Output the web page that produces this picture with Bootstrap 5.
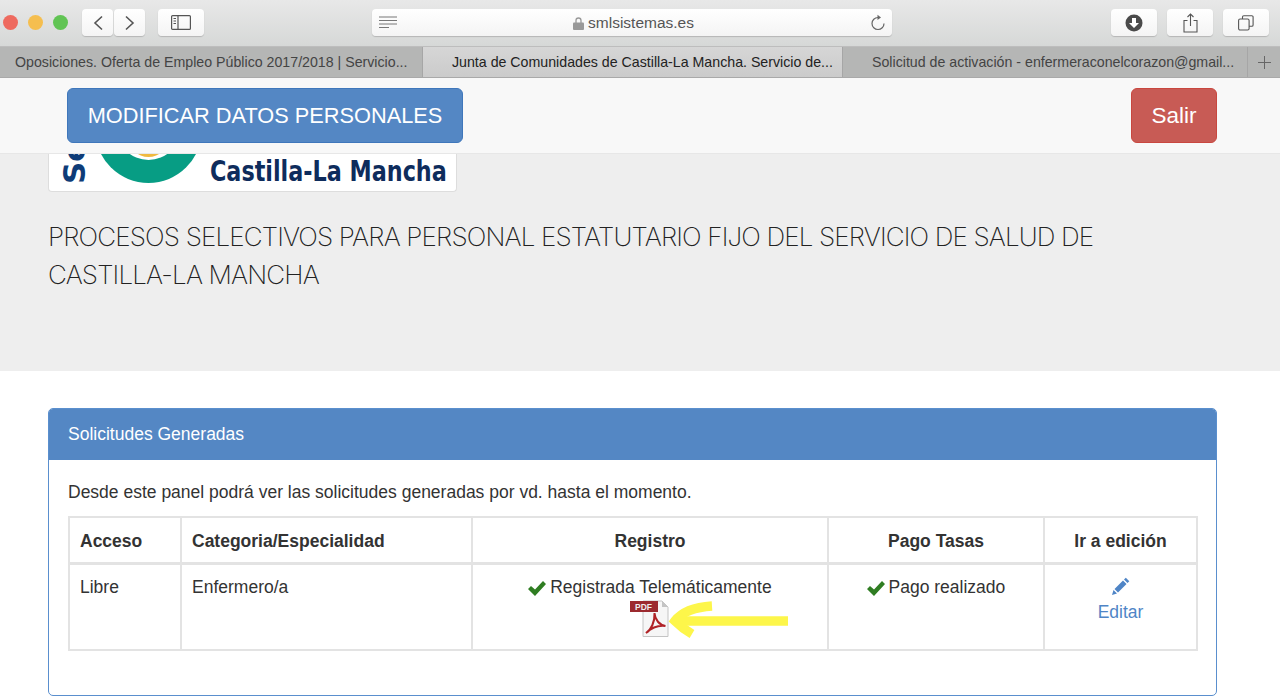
<!doctype html>
<html lang="es">
<head>
<meta charset="utf-8">
<title>Solicitudes</title>
<link href="https://cdn.jsdelivr.net/npm/bootstrap@5.3.0/dist/css/bootstrap.min.css" rel="stylesheet">
<style>
html,body{height:700px;overflow:hidden}
body{font-family:"Liberation Sans",Arial,sans-serif;font-size:17.5px;color:#333;background:#fff}
.chrome-top{height:46px;background:linear-gradient(#e8e8e8,#d6d8d7);padding:9px 0 0 3px}
.light{width:15px;height:15px;border-radius:50%}
.lights{height:27px;gap:10px}
.tb-btn{height:27px;background:linear-gradient(#fff,#f4f4f4);border-radius:4px;box-shadow:0 1px 1px #b5b5b5;display:flex;align-items:center;justify-content:center;color:#555}
.navs{gap:1px;margin-left:14px}
.side-btn{width:46px;margin-left:13px}
.addr{width:520px;margin-left:168px;justify-content:space-between;padding:0 7px;font-size:15.5px;color:#555}
.addr-label{margin-top:1px}
.tools{gap:10px;margin-right:11px}
.tool-btn{width:46px}
.tabbar{height:32px;background:#b5b6b5;border-top:1px solid #bdbdbd;border-bottom:1px solid #a9a9a9;font-size:14.2px;color:#444}
.tabx{width:423px;padding-left:15px;line-height:30px;white-space:nowrap;border-right:1px solid #a6a6a6;overflow:hidden}
.tabx.active{width:420px;background:linear-gradient(#d6d6d6,#cbcbcb);color:#222;padding-left:29px}
.tabx.third{padding-left:29px;width:405px}
.tabplus{flex:1;display:flex;align-items:center;justify-content:center}
.topbar{height:76px;background:#f8f8f8;border-bottom:1px solid #e7e7e7;padding:10px 63px 0 67px}
.blue-btn{background:#5487c4;border:1px solid #3f77bb;color:#fff;font-size:21.75px;border-radius:6px;height:55px;width:396px;padding:1px 0 0;display:flex;align-items:center;justify-content:center}
.red-btn{background:#c85b55;border:1px solid #c9473f;color:#fff;font-size:22.5px;border-radius:6px;height:55px;width:86px;padding:0;display:flex;align-items:center;justify-content:center}
.hero{height:217px;background:#eee;padding-left:48px}
.logo-box{width:409px;height:38px;background:#fff;border:1px solid #ddd;border-top:0;border-radius:0 0 4px 4px;overflow:hidden;display:flex}
.logo-text{font-family:"DejaVu Sans Condensed","DejaVu Sans",sans-serif;font-weight:700;font-size:28px;line-height:30px;color:#0e2c5c;margin:3px 0 0 11px;white-space:nowrap;transform:scaleX(.885);transform-origin:left}
.hero-title{font-family:Inter,sans-serif;font-weight:200;font-size:26px;letter-spacing:-.85px;line-height:38px;color:#222;margin:26px 0 0;width:1100px}
.panel-box{margin:37px 63px 0 48px;height:288px;border:1px solid #5a8fce;border-radius:5px;overflow:hidden}
.panel-head{height:51px;background:#5487c4;color:#fff;padding:0 19px;line-height:51px;font-size:17.5px}
.panel-body{padding:22px 19px 0}
.panel-body p{margin:0 0 14px;line-height:20px;color:#333}
.req{table-layout:fixed;width:1128px;margin:0;border-collapse:collapse;color:#333}
.req td,.req th{border:2px solid #e3e3e3;padding:11px 10px;line-height:23px;font-size:17.5px;vertical-align:top}
.req thead th{height:46px;padding:12px 10px 9px;border-bottom-width:3px;font-weight:700}
.req tbody td{height:84px}
.edit-link{color:#4f85c6;text-decoration:none;display:block;line-height:24px}
.edit-ico{display:block;margin:1px auto 4px}
.check-ico{margin-right:-1px}
.arrow{position:absolute;left:39px;top:-3px}
.pdf-wrap{position:relative;width:40px;height:38px;margin:1px auto 0;left:-1px}
.pdf-ico{display:block}
</style>
</head>
<body>
<div class="chrome-top d-flex">
  <div class="d-flex align-items-center lights"><span class="light" style="background:#ee6a5f"></span><span class="light" style="background:#f5be4f"></span><span class="light" style="background:#61c454"></span></div>
  <div class="d-flex navs">
    <div class="tb-btn" style="width:31px"><svg width="12" height="16" viewBox="0 0 12 16" fill="none" stroke="#555" stroke-width="1.6"><path d="M10 1.5 3 8l7 6.5"/></svg></div>
    <div class="tb-btn" style="width:31px"><svg width="12" height="16" viewBox="0 0 12 16" fill="none" stroke="#555" stroke-width="1.6"><path d="M2 1.5 9 8l-7 6.5"/></svg></div>
  </div>
  <div class="tb-btn side-btn"><svg width="20" height="15" viewBox="0 0 20 15" fill="none" stroke="#555" stroke-width="1.2"><rect x=".6" y=".6" width="18.8" height="13.8" rx="1"/><path d="M7 .6v13.8M2.5 3.5h2.5M2.5 6h2.5M2.5 8.5h2.5"/></svg></div>
  <div class="tb-btn addr">
    <svg width="18" height="13" viewBox="0 0 18 13" stroke="#777" stroke-width="1"><path d="M0 1h18M0 4.500h18M0 8h18M0 11.500h10"/></svg>
    <span class="d-flex align-items-center gap-1 addr-label"><svg width="11" height="13" viewBox="0 0 11 13"><path d="M3 6V3.500a2.500 2.500 0 0 1 5 0V6" fill="none" stroke="#999" stroke-width="1.300"/><rect y="5.500" width="11" height="7.500" rx="1" fill="#999"/></svg>smlsistemas.es</span>
    <svg width="15" height="17" viewBox="0 0 15 17" fill="none" stroke="#666" stroke-width="1.200"><path d="M8 3.500a6 6 0 1 0 6 6"/><path d="M7.500 .8 11 3.500 7.500 6z" fill="#666" stroke="none"/></svg>
  </div>
  <div class="d-flex ms-auto tools">
    <div class="tb-btn tool-btn"><svg width="18" height="18" viewBox="0 0 18 18"><circle cx="9" cy="9" r="8.500" fill="#4a4a4a"/><path d="M7 4h4v5h3l-5 5-5-5h3z" fill="#fff"/></svg></div>
    <div class="tb-btn tool-btn"><svg width="15" height="20" viewBox="0 0 15 20" fill="none" stroke="#555" stroke-width="1.100"><path d="M4.500 7.500H1v11.500h13V7.500h-3.500M7.500 13V1M4.500 4l3-3 3 3"/></svg></div>
    <div class="tb-btn tool-btn"><svg width="16" height="16" viewBox="0 0 16 16" fill="none" stroke="#555" stroke-width="1.100"><rect x=".6" y="4" width="10.500" height="11" rx="1.500"/><path d="M4.500 4V2a1.300 1.300 0 0 1 1.300-1.300h8a1.300 1.300 0 0 1 1.300 1.300v8a1.300 1.300 0 0 1-1.300 1.300H11"/></svg></div>
  </div>
</div>
<div class="tabbar d-flex">
  <div class="tabx">Oposiciones. Oferta de Empleo Público 2017/2018 | Servicio...</div>
  <div class="tabx active">Junta de Comunidades de Castilla-La Mancha. Servicio de...</div>
  <div class="tabx third">Solicitud de activación - enfermeraconelcorazon@gmail...</div>
  <div class="tabplus"><svg width="13" height="13" viewBox="0 0 13 13" stroke="#666" stroke-width="1"><path d="M6.500 0v13M0 6.500h13"/></svg></div>
</div>
<div class="topbar d-flex justify-content-between">
  <button class="btn blue-btn" type="button">MODIFICAR DATOS PERSONALES</button>
  <button class="btn red-btn" type="button">Salir</button>
</div>
<div class="hero">
  <div class="logo-box">
    <svg width="150" height="38" viewBox="0 0 150 38" style="flex:none"><text transform="translate(36 30) rotate(-90)" font-family="DejaVu Sans" font-weight="700" font-size="31" fill="#0e3c78">Se</text><circle cx="99.500" cy="-24.400" r="53.400" fill="#079d84"/><circle cx="99.500" cy="-26" r="32" fill="#fff"/><circle cx="99.500" cy="-17" r="20" fill="#efb93f"/></svg>
    <div class="logo-text">Castilla-La Mancha</div>
  </div>
  <h1 class="hero-title">PROCESOS SELECTIVOS PARA PERSONAL ESTATUTARIO FIJO DEL SERVICIO DE SALUD DE CASTILLA-LA MANCHA</h1>
</div>
<div class="panel-box">
  <div class="panel-head">Solicitudes Generadas</div>
  <div class="panel-body">
    <p>Desde este panel podrá ver las solicitudes generadas por vd. hasta el momento.</p>
    <table class="req">
      <colgroup><col style="width:112px"><col style="width:291px"><col style="width:356px"><col style="width:216px"><col style="width:153px"></colgroup>
      <thead><tr><th>Acceso</th><th>Categoria/Especialidad</th><th class="text-center">Registro</th><th class="text-center">Pago Tasas</th><th class="text-center">Ir a edición</th></tr></thead>
      <tbody><tr>
        <td>Libre</td>
        <td>Enfermero/a</td>
        <td class="text-center">
          <svg class="check-ico" width="18" height="15" viewBox="0 0 18 15"><path d="M0 8 3 5l4 3.500L15 0l3 3L7 15z" fill="#2f7d22"/></svg> Registrada Telemáticamente
          <div class="pdf-wrap">
            <svg class="pdf-ico" width="40" height="38" viewBox="0 0 40 38"><path d="M14 1h19l6 6v29.500H14z" fill="#f6f6f6" stroke="#c4c4c4"/><path d="M33 1v6h6z" fill="#c4c4c4"/><rect x="1" y="1" width="28" height="11" fill="#9c2a2f"/><text x="14.500" y="9.500" font-family="Liberation Sans" font-size="8.500" font-weight="700" fill="#eee" text-anchor="middle">PDF</text><path d="M17 33c5-3 9-11 8.500-20 .5 7 5 12 11 13-7-1-13 1-19.500 7z" fill="none" stroke="#b02226" stroke-width="2"/></svg>
            <svg class="arrow" width="122" height="46" viewBox="0 0 122 46" fill="none" stroke="#fdf64a" stroke-width="9.500"><path d="M120 24H10"/><path d="M44 9C28 10 14 15 7 24c5 5 10 9 17 13"/></svg>
          </div>
        </td>
        <td class="text-center"><svg class="check-ico" width="18" height="15" viewBox="0 0 18 15"><path d="M0 8 3 5l4 3.500L15 0l3 3L7 15z" fill="#2f7d22"/></svg> Pago realizado</td>
        <td class="text-center"><a class="edit-link" href="#"><svg class="edit-ico" width="19" height="19" viewBox="0 0 19 19" fill="#4f85c6"><path d="M1 18l1.500-5 3.500 3.500zM3.500 12 12 3.500l3.500 3.500L7 15.500zM13 2.500l1.800-1.800 3.500 3.500L16.500 6z"/></svg>Editar</a></td>
      </tr></tbody>
    </table>
  </div>
</div>
<script src="https://cdn.jsdelivr.net/npm/bootstrap@5.3.0/dist/js/bootstrap.bundle.min.js"></script>
</body>
</html>
